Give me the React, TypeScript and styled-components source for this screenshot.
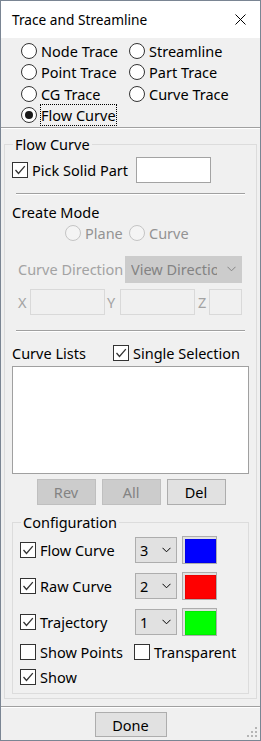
import React from "react";
import styled, { createGlobalStyle } from "styled-components";

const GlobalStyle = createGlobalStyle`
  html, body { margin: 0; padding: 0; background: #ffffff; }
  body {
    font-family: "Noto Sans", "Liberation Sans", sans-serif;
    font-size: 14.5px;
    color: #000;
  }
  * { box-sizing: border-box; }
`;

const Window = styled.div`
  position: relative;
  width: 261px;
  height: 741px;
  border: 1px solid #7a8593;
  display: flex;
  flex-direction: column;
  background: #f0f0f0;
`;

const TitleBar = styled.div`
  flex: none;
  height: 37px;
  background: #ffffff;
  display: flex;
  align-items: center;
  justify-content: space-between;
  padding: 0 14px 0 11px;
`;

const TitleText = styled.span`
  font-size: 13.7px;
  line-height: 20px;
`;

const Body = styled.div`
  flex: 1;
  display: flex;
  flex-direction: column;
`;

const RadioGrid = styled.div`
  display: grid;
  grid-template-columns: 108px 1fr;
  grid-auto-rows: 21.5px;
  padding: 2px 0 0 20px;
`;

const ChoiceItem = styled.label<{ $w?: number }>`
  display: flex;
  align-items: center;
  gap: 4px;
  line-height: 20px;
  white-space: nowrap;
  ${(p) => (p.$w ? `width: ${p.$w}px; flex: none;` : "")}
`;

const RadioCircle = styled.span<{ $checked?: boolean; $disabled?: boolean }>`
  flex: none;
  width: 16px;
  height: 16px;
  border-radius: 50%;
  border: 1px solid ${(p) => (p.$disabled ? "#c4c4c4" : "#333333")};
  background: ${(p) => (p.$disabled ? "#f4f4f4" : "#ffffff")};
  display: flex;
  align-items: center;
  justify-content: center;
  &::after {
    content: "";
    display: ${(p) => (p.$checked ? "block" : "none")};
    width: 8px;
    height: 8px;
    border-radius: 50%;
    background: #1a1a1a;
  }
`;

const ChoiceText = styled.span<{ $focused?: boolean; $disabled?: boolean; $dim?: string }>`
  color: ${(p) => (p.$disabled ? p.$dim ?? "#9a9a9a" : "#000")};
  ${(p) => (p.$focused ? "outline: 1px dotted #000; outline-offset: 0px;" : "")}
`;

const CheckBoxBox = styled.span`
  flex: none;
  width: 16px;
  height: 16px;
  border: 1px solid #333333;
  background: #ffffff;
  display: flex;
  align-items: center;
  justify-content: center;
`;

const Separator = styled.div<{ $top: number; $inset: number }>`
  flex: none;
  height: 2px;
  border-top: 1px solid #a0a0a0;
  border-bottom: 1px solid #ffffff;
  margin: ${(p) => p.$top}px ${(p) => p.$inset}px 0;
`;

const Group = styled.fieldset<{ $top: number; $bottom: number; $side: number }>`
  margin: ${(p) => p.$top}px ${(p) => p.$side}px 0;
  padding: 0 7px ${(p) => p.$bottom}px;
  border: 1px solid #dcdcdc;
  min-width: 0;
  display: flex;
  flex-direction: column;
`;

const Legend = styled.legend`
  margin-left: 1px;
  padding: 0 2px;
  line-height: 20px;
`;

const Row = styled.div<{ $top: number; $h: number; $left?: number }>`
  display: flex;
  align-items: center;
  height: ${(p) => p.$h}px;
  margin-top: ${(p) => p.$top}px;
  padding-left: ${(p) => p.$left ?? 0}px;
`;

const TextBox = styled.div<{ $w: number; $disabled?: boolean }>`
  flex: none;
  width: ${(p) => p.$w}px;
  height: 26px;
  background: ${(p) => (p.$disabled ? "#f0f0f0" : "#ffffff")};
  border: 1px solid ${(p) => (p.$disabled ? "#d9d9d9" : "#a3a3a3")};
`;

const SectionLabel = styled.div<{ $top: number }>`
  line-height: 20px;
  margin-top: ${(p) => p.$top}px;
`;

const PlainLabel = styled.span<{ $w: number }>`
  flex: none;
  width: ${(p) => p.$w}px;
  line-height: 20px;
`;

const DimLabel = styled.span<{ $w: number; $pad?: number }>`
  flex: none;
  width: ${(p) => p.$w}px;
  padding-left: ${(p) => p.$pad ?? 0}px;
  line-height: 20px;
  color: #a3a3a3;
  white-space: nowrap;
`;

const ModeGrid = styled.div`
  display: grid;
  grid-template-columns: 64px auto;
  height: 20px;
  margin-top: 1px;
  padding-left: 53px;
`;

const Combo = styled.div<{ $w: number; $h: number; $disabled?: boolean }>`
  flex: none;
  width: ${(p) => p.$w}px;
  height: ${(p) => p.$h}px;
  background: ${(p) => (p.$disabled ? "#cccccc" : "#e1e1e1")};
  border: 1px solid ${(p) => (p.$disabled ? "#cccccc" : "#adadad")};
  color: ${(p) => (p.$disabled ? "#838383" : "#000")};
  display: flex;
  align-items: center;
  padding: 0 5px 0 ${(p) => (p.$disabled ? 5 : 4)}px;
  gap: ${(p) => (p.$disabled ? 10 : 4)}px;
`;

const ComboText = styled.span`
  flex: 1;
  overflow: hidden;
  white-space: nowrap;
  line-height: 20px;
`;

const ListBox = styled.div`
  height: 108px;
  margin-top: 3px;
  background: #ffffff;
  border: 1px solid #a0a0a0;
`;

const ButtonRow = styled.div`
  display: flex;
  justify-content: center;
  gap: 6px;
  margin-top: 5px;
  padding-left: 1px;
`;

const Button = styled.button<{ $w: number; $h: number; $disabled?: boolean }>`
  width: ${(p) => p.$w}px;
  height: ${(p) => p.$h}px;
  padding: 0;
  font: inherit;
  line-height: 20px;
  background: ${(p) => (p.$disabled ? "#cccccc" : "#e1e1e1")};
  border: 1px solid ${(p) => (p.$disabled ? "#bfbfbf" : "#adadad")};
  color: ${(p) => (p.$disabled ? "#838383" : "#000")};
`;

const Swatch = styled.div<{ $color: string }>`
  flex: none;
  width: 35px;
  height: 28px;
  margin-left: 5px;
  background: #e1e1e1;
  border: 1px solid #adadad;
  padding: 2px;
  &::after {
    content: "";
    display: block;
    width: 100%;
    height: 100%;
    background: ${(p) => p.$color};
    border: 1px solid rgba(0, 0, 0, 0.08);
  }
`;

const Footer = styled.div`
  display: flex;
  justify-content: center;
  margin-top: 4px;
`;

const Grip = styled.svg`
  position: absolute;
  right: 2px;
  bottom: 2px;
`;

const Check = () => (
  <svg width="12" height="12" viewBox="0 0 12 12">
    <polyline points="1.5,6 4.5,9.5 10.8,2.2" fill="none" stroke="#333" strokeWidth="1.3" />
  </svg>
);

const Chevron = () => (
  <svg width="9" height="6" viewBox="0 0 9 6">
    <polyline points="0.5,0.8 4.5,4.8 8.5,0.8" fill="none" stroke="currentColor" strokeWidth="1" />
  </svg>
);

type RadioProps = { label: string; checked?: boolean; disabled?: boolean; focused?: boolean };
const Radio = ({ label, checked, disabled, focused }: RadioProps) => (
  <ChoiceItem>
    <RadioCircle $checked={checked} $disabled={disabled} />
    <ChoiceText $focused={focused} $disabled={disabled} $dim="#939393">
      {label}
    </ChoiceText>
  </ChoiceItem>
);

type CheckProps = { label: string; checked?: boolean; w?: number };
const CheckBox = ({ label, checked, w }: CheckProps) => (
  <ChoiceItem $w={w}>
    <CheckBoxBox>{checked ? <Check /> : null}</CheckBoxBox>
    <ChoiceText>{label}</ChoiceText>
  </ChoiceItem>
);

const configRows = [
  { label: "Flow Curve", value: "3", color: "#0000ff" },
  { label: "Raw Curve", value: "2", color: "#ff0000" },
  { label: "Trajectory", value: "1", color: "#00ff00" },
];

export default function App() {
  return (
    <>
      <GlobalStyle />
      <Window>
        <TitleBar>
          <TitleText>Trace and Streamline</TitleText>
          <svg width="11" height="11" viewBox="0 0 11 11">
            <path d="M0.5 0.5 L10.5 10.5 M10.5 0.5 L0.5 10.5" stroke="#000" strokeWidth="1" />
          </svg>
        </TitleBar>
        <Body>
          <RadioGrid>
            <Radio label="Node Trace" />
            <Radio label="Streamline" />
            <Radio label="Point Trace" />
            <Radio label="Part Trace" />
            <Radio label="CG Trace" />
            <Radio label="Curve Trace" />
            <Radio label="Flow Curve" checked focused />
          </RadioGrid>
          <Separator $top={1} $inset={0} />
          <Group $top={5} $bottom={4} $side={3}>
            <Legend>Flow Curve</Legend>
            <Row $top={3} $h={26}>
              <CheckBox label="Pick Solid Part" checked w={124} />
              <TextBox $w={75} />
            </Row>
            <Separator $top={10} $inset={4} />
            <SectionLabel $top={7}>Create Mode</SectionLabel>
            <ModeGrid>
              <Radio label="Plane" disabled />
              <Radio label="Curve" disabled />
            </ModeGrid>
            <Row $top={12} $h={28} $left={6}>
              <DimLabel $w={107}>Curve Direction</DimLabel>
              <Combo $w={117} $h={27} $disabled>
                <ComboText>View Direction</ComboText>
                <Chevron />
              </Combo>
            </Row>
            <Row $top={6} $h={26} $left={6}>
              <DimLabel $w={12}>X</DimLabel>
              <TextBox $w={75} $disabled />
              <DimLabel $w={15} $pad={2}>Y</DimLabel>
              <TextBox $w={75} $disabled />
              <DimLabel $w={14} $pad={3}>Z</DimLabel>
              <TextBox $w={33} $disabled />
            </Row>
            <Separator $top={15} $inset={4} />
            <Row $top={11} $h={20}>
              <PlainLabel $w={101}>Curve Lists</PlainLabel>
              <CheckBox label="Single Selection" checked />
            </Row>
            <ListBox />
            <ButtonRow>
              <Button $w={59} $h={26} $disabled>Rev</Button>
              <Button $w={59} $h={26} $disabled>All</Button>
              <Button $w={59} $h={26}>Del</Button>
            </ButtonRow>
            <Group $top={7} $bottom={6} $side={0}>
              <Legend>Configuration</Legend>
              {configRows.map((r, i) => (
                <Row key={r.label} $top={i === 0 ? 4 : 8} $h={28}>
                  <CheckBox label={r.label} checked w={115} />
                  <Combo $w={42} $h={26}>
                    <ComboText>{r.value}</ComboText>
                    <Chevron />
                  </Combo>
                  <Swatch $color={r.color} />
                </Row>
              ))}
              <Row $top={6} $h={20}>
                <CheckBox label="Show Points" w={114} />
                <CheckBox label="Transparent" />
              </Row>
              <Row $top={5} $h={20}>
                <CheckBox label="Show" checked />
              </Row>
            </Group>
          </Group>
          <Separator $top={7} $inset={0} />
          <Footer>
            <Button $w={72} $h={25}>Done</Button>
          </Footer>
        </Body>
        <Grip width="12" height="12" viewBox="0 0 12 12">
          <g fill="#b5b5b5">
            <rect x="9" y="1" width="2" height="2" />
            <rect x="5" y="5" width="2" height="2" />
            <rect x="9" y="5" width="2" height="2" />
            <rect x="1" y="9" width="2" height="2" />
            <rect x="5" y="9" width="2" height="2" />
            <rect x="9" y="9" width="2" height="2" />
          </g>
        </Grip>
      </Window>
    </>
  );
}
